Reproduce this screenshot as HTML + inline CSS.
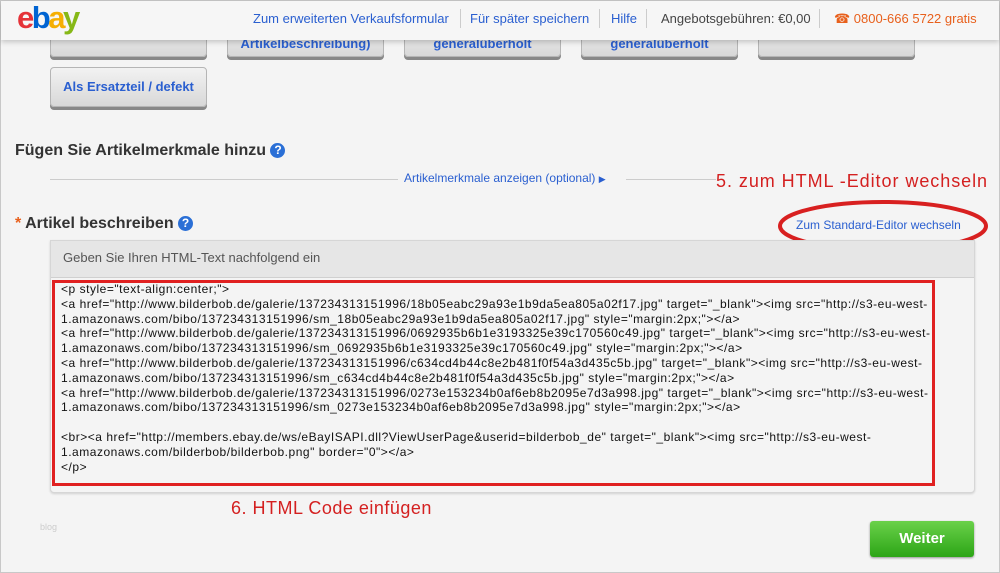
<!DOCTYPE html>
<html><head><meta charset="utf-8"><style>
body{margin:0;width:1000px;height:573px;overflow:hidden;background:#f4f4f4;font-family:"Liberation Sans",Arial,sans-serif;position:relative}
.frame{position:absolute;left:0;top:0;width:998px;height:571px;border:1px solid #c8c8c8}
.hdr{position:absolute;left:1px;top:1px;width:998px;height:39px;background:#f6f6f6;box-shadow:0 2px 5px rgba(0,0,0,.2);z-index:5}
.logo{position:absolute;left:16px;top:-1px;font-size:31px;font-weight:bold;letter-spacing:-2.5px}
.nav{position:absolute;top:10px;font-size:13px;color:#2a5fd0}
.sep{position:absolute;top:8px;width:1px;height:19px;background:#ccc}
.btn{position:absolute;width:155px;height:38px;border:1px solid #b5b5b5;border-radius:4px;background:linear-gradient(#f2f2f2,#d8d8d8);box-shadow:0 3px 0 #888;font-weight:bold;font-size:13px;color:#2a5fd0;text-align:center;line-height:38px}
.abs{position:absolute}
.code{position:absolute;left:61px;top:282px;font-size:12px;line-height:14.8px;color:#111;white-space:pre;letter-spacing:.52px}
.q{display:inline-block;width:15px;height:15px;border-radius:50%;background:#2a6fd6;color:#fff;font-size:12px;text-align:center;line-height:15px;vertical-align:1px}
</style></head><body>
<div class="frame"></div>
<div class="btn" style="left:50px;top:17px"></div>
<div class="btn" style="left:227px;top:17px;line-height:52px">Artikelbeschreibung)</div>
<div class="btn" style="left:404px;top:17px;line-height:52px">generalüberholt</div>
<div class="btn" style="left:581px;top:17px;line-height:52px">generalüberholt</div>
<div class="btn" style="left:758px;top:17px"></div>
<div class="hdr">
<div class="logo"><span style="color:#e53238">e</span><span style="color:#0064d2">b</span><span style="color:#f5af02">a</span><span style="color:#86b817">y</span></div>
<div class="nav" style="left:252px">Zum erweiterten Verkaufsformular</div>
<div class="sep" style="left:459px"></div>
<div class="nav" style="left:469px">Für später speichern</div>
<div class="sep" style="left:598px"></div>
<div class="nav" style="left:610px">Hilfe</div>
<div class="sep" style="left:645px"></div>
<div class="nav" style="left:660px;color:#444">Angebotsgebühren: €0,00</div>
<div class="sep" style="left:818px"></div>
<div class="nav" style="left:833px;color:#e8601c">☎ 0800-666 5722 gratis</div>
</div>
<div class="btn" style="left:50px;top:67px">Als Ersatzteil / defekt</div>
<div class="abs" style="left:15px;top:142px;font-size:16px;font-weight:bold;color:#333">Fügen Sie Artikelmerkmale hinzu <span class="q">?</span></div>
<div class="abs" style="left:50px;top:179px;width:348px;height:1px;background:#ccc"></div>
<div class="abs" style="left:404px;top:171px;font-size:12px;color:#2a5fd0">Artikelmerkmale anzeigen (optional) <span style="font-size:9px">▶</span></div>
<div class="abs" style="left:626px;top:179px;width:90px;height:1px;background:#ccc"></div>
<div class="abs" style="left:716px;top:171px;font-size:18px;color:#d42020;letter-spacing:.95px">5. zum HTML -Editor wechseln</div>
<div class="abs" style="left:15px;top:215px;font-size:16px;font-weight:bold;color:#333"><span style="color:#e8601c">*</span> Artikel beschreiben <span class="q">?</span></div>
<div class="abs" style="left:796px;top:218px;font-size:12px;color:#2a5fd0">Zum Standard-Editor wechseln</div>
<svg class="abs" style="left:775px;top:196px" width="220" height="60"><ellipse cx="108" cy="30" rx="103" ry="24" fill="none" stroke="#d82020" stroke-width="4"/></svg>
<div class="abs" style="left:50px;top:240px;width:923px;height:251px;border:1px solid #d6d6d6;border-radius:0 0 4px 4px;background:#f4f4f4;box-shadow:0 1px 2px rgba(0,0,0,.15)"></div>
<div class="abs" style="left:51px;top:241px;width:923px;height:36px;background:#e6e6e6;border-bottom:1px solid #d0d0d0"></div>
<div class="abs" style="left:63px;top:250px;font-size:13px;color:#555">Geben Sie Ihren HTML-Text nachfolgend ein</div>
<div class="abs" style="left:52px;top:280px;width:877px;height:200px;border:3px solid #e02020"></div>
<div class="code">&lt;p style="text-align:center;"&gt;
&lt;a href="http://www.bilderbob.de/galerie/137234313151996/18b05eabc29a93e1b9da5ea805a02f17.jpg" target="_blank"&gt;&lt;img src="http://s3-eu-west-
1.amazonaws.com/bibo/137234313151996/sm_18b05eabc29a93e1b9da5ea805a02f17.jpg" style="margin:2px;"&gt;&lt;/a&gt;
&lt;a href="http://www.bilderbob.de/galerie/137234313151996/0692935b6b1e3193325e39c170560c49.jpg" target="_blank"&gt;&lt;img src="http://s3-eu-west-
1.amazonaws.com/bibo/137234313151996/sm_0692935b6b1e3193325e39c170560c49.jpg" style="margin:2px;"&gt;&lt;/a&gt;
&lt;a href="http://www.bilderbob.de/galerie/137234313151996/c634cd4b44c8e2b481f0f54a3d435c5b.jpg" target="_blank"&gt;&lt;img src="http://s3-eu-west-
1.amazonaws.com/bibo/137234313151996/sm_c634cd4b44c8e2b481f0f54a3d435c5b.jpg" style="margin:2px;"&gt;&lt;/a&gt;
&lt;a href="http://www.bilderbob.de/galerie/137234313151996/0273e153234b0af6eb8b2095e7d3a998.jpg" target="_blank"&gt;&lt;img src="http://s3-eu-west-
1.amazonaws.com/bibo/137234313151996/sm_0273e153234b0af6eb8b2095e7d3a998.jpg" style="margin:2px;"&gt;&lt;/a&gt;

&lt;br&gt;&lt;a href="http://members.ebay.de/ws/eBayISAPI.dll?ViewUserPage&amp;userid=bilderbob_de" target="_blank"&gt;&lt;img src="http://s3-eu-west-
1.amazonaws.com/bilderbob/bilderbob.png" border="0"&gt;&lt;/a&gt;
&lt;/p&gt;</div>
<div class="abs" style="left:231px;top:498px;font-size:18px;color:#d42020;letter-spacing:.5px">6. HTML Code einfügen</div>
<div class="abs" style="left:40px;top:522px;font-size:9px;color:#ccc">blog</div>
<div class="abs" style="left:870px;top:521px;width:104px;height:36px;border-radius:3px;background:linear-gradient(#6ad14a,#2ca516);box-shadow:0 1px 2px rgba(0,0,0,.4);color:#fff;font-weight:bold;font-size:15px;text-align:center;line-height:36px">Weiter</div>
</body></html>
